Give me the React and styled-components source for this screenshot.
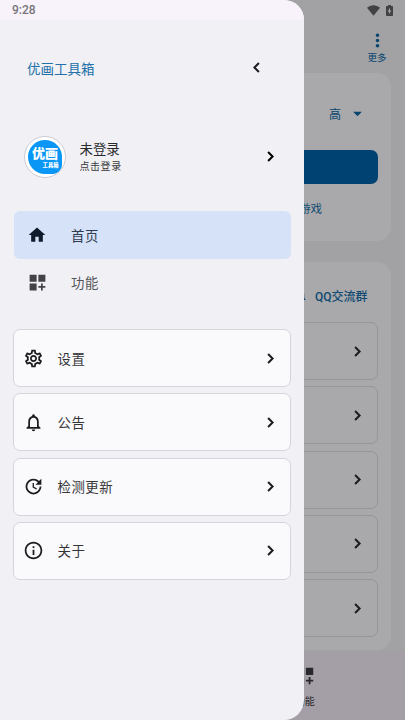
import React from 'react';
import styled, { createGlobalStyle } from 'styled-components';
import {
  MdHome,
  MdDashboardCustomize,
  MdOutlineSettings,
  MdNotifications,
  MdNotificationsNone,
  MdUpdate,
  MdInfoOutline,
  MdMoreVert,
  MdArrowDropDown,
} from 'react-icons/md';

const GlobalStyle = createGlobalStyle`
  * {
    box-sizing: border-box;
  }
  body {
    margin: 0;
    font-family: Roboto, "Noto Sans CJK SC", sans-serif;
  }
  svg {
    display: block;
    flex-shrink: 0;
  }
`;

const Screen = styled.div`
  position: relative;
  display: flex;
  flex-direction: column;
  width: 405px;
  height: 720px;
  overflow: hidden;
  background: #a2a2a4;
`;

const StatusBar = styled.div`
  display: flex;
  justify-content: flex-end;
  align-items: center;
  gap: 6px;
  height: 20px;
  padding-right: 12px;
  color: #424244;
`;

const TopBar = styled.div`
  display: flex;
  justify-content: flex-end;
  height: 53px;
  padding: 10px 16px 0 0;
`;

const MoreButton = styled.div`
  display: flex;
  flex-direction: column;
  align-items: center;
  width: 24px;
  color: #08456f;
  font-size: 9.5px;
  line-height: 14px;
  white-space: nowrap;
`;

const Card = styled.section`
  height: ${(props) => props.$height}px;
  margin: 0 14px ${(props) => props.$gap}px;
  padding: 0 13px;
  border-radius: 14px;
  background: #a9a9ab;
`;

const SelectRow = styled.div`
  display: flex;
  justify-content: flex-end;
  align-items: center;
  gap: 6px;
  height: 77px;
  padding: 3px 10px 0 0;
  color: #08456f;
  font-size: 12px;
`;

const PrimaryButton = styled.div`
  height: 34px;
  border-radius: 7px;
  background: #004272;
`;

const LinkRow = styled.div`
  display: flex;
  justify-content: flex-end;
  align-items: center;
  height: ${(props) => props.$height}px;
  padding-right: ${(props) => props.$right}px;
  padding-top: ${(props) => props.$top || 0}px;
  color: #0f4b72;
  font-size: ${(props) => props.$size}px;
  font-weight: ${(props) => props.$weight || 400};
`;

const BellMark = styled.span`
  display: flex;
  margin-right: 7px;
`;

const List = styled.div`
  display: flex;
  flex-direction: column;
  gap: 6.3px;
`;

const ListRow = styled.div`
  display: flex;
  align-items: center;
  height: 58px;
  padding: 0 9px;
  border: 1px solid ${(props) => (props.$dim ? '#969698' : '#d5d5dc')};
  border-radius: 7px;
  background: ${(props) => (props.$dim ? 'transparent' : '#fafafd')};
  color: #1c1c1f;
`;

const RowText = styled.span`
  flex: 1;
  margin-left: 13.5px;
  padding-bottom: 1px;
  color: #353538;
  font-size: 13.4px;
  letter-spacing: 0.5px;
`;

const Spacer = styled.div`
  flex: 1;
`;

const BottomNav = styled.nav`
  display: flex;
  flex: 1;
  background: #a49fa6;
`;

const NavTab = styled.div`
  display: flex;
  flex: 1;
  flex-direction: column;
  align-items: center;
  gap: 7px;
  padding: 14px 0 0 2px;
  color: #29282c;
  font-size: 10px;
  line-height: 15px;
`;

/* The drawer lies over the dimmed page */
const Drawer = styled.aside`
  position: absolute;
  top: 0;
  left: 0;
  width: 303.5px;
  height: 720px;
  overflow: hidden;
  border-radius: 0 20px 20px 0;
  background: #f0f0f5;
`;

const DrawerStatus = styled.div`
  height: 20px;
  padding-left: 12px;
  background: #f8f2fb;
  color: #77757a;
  font-size: 12px;
  font-weight: 500;
  line-height: 21px;
`;

const DrawerHeader = styled.div`
  display: flex;
  justify-content: space-between;
  align-items: center;
  height: 96px;
  padding: 0 36.5px 1px 27px;
  color: #1c1c1f;
`;

const Title = styled.span`
  color: #2371a8;
  font-size: 13.5px;
`;

const Profile = styled.div`
  display: flex;
  align-items: center;
  height: 82px;
  margin-bottom: 13px;
  padding: 0 23px 1px 24px;
`;

const Avatar = styled.div`
  display: flex;
  width: 42px;
  height: 42px;
  padding: 3px;
  border: 1px solid #cdccd2;
  border-radius: 50%;
  background: #fff;
  overflow: hidden;
`;

const AvatarMark = styled.div`
  display: flex;
  flex-direction: column;
  align-items: center;
  width: 34px;
  height: 34px;
  flex-shrink: 0;
  padding-top: 6px;
  border-radius: 17px 17px 9px 17px;
  background: #0a96f5;
  color: #fff;
  font-weight: 900;
  white-space: nowrap;
`;

const AvatarName = styled.span`
  font-size: 13px;
  line-height: 15px;
`;

const AvatarSub = styled.span`
  align-self: flex-end;
  padding-right: 3.5px;
  font-size: 5.3px;
  line-height: 8px;
`;

const ProfileText = styled.div`
  flex: 1;
  margin-left: 13.5px;
  padding-top: 2px;
  color: #29292c;
`;

const ProfileName = styled.div`
  font-size: 13.4px;
  line-height: 19px;
`;

const ProfileHint = styled.div`
  color: #39393c;
  font-size: 10px;
  letter-spacing: 0.55px;
  line-height: 16px;
`;

const MenuItem = styled.div`
  display: flex;
  align-items: center;
  height: 47.5px;
  margin: 0 13px 0 13.5px;
  padding-left: 13px;
  border-radius: 6px;
  background: ${(props) => (props.$active ? '#d6e2f8' : 'transparent')};
  color: ${(props) => (props.$active ? '#0d1b2c' : '#434347')};
`;

const MenuIcon = styled.span`
  display: flex;
  justify-content: center;
  width: 21px;
  margin-right: 23.5px;
`;

const MenuText = styled.span`
  color: ${(props) => (props.$active ? '#303b4d' : '#56565a')};
  font-size: 13.4px;
  letter-spacing: 0.5px;
`;

const DrawerList = styled(List)`
  margin: 23px 13px 0;
`;

const WifiIcon = () => (
  <svg width="13" height="11" viewBox="0 0 13 11" fill="currentColor">
    <path d="M0 2.8C3.8-.6 9.2-.6 13 2.8L6.5 10.8Z" />
  </svg>
);

const BatteryIcon = () => (
  <svg width="7" height="11" viewBox="0 0 7 11" fill="currentColor">
    <path
      fillRule="evenodd"
      d="M2 0h3v1h1.2q.8 0 .8.8v8.4q0 .8-.8.8H.8Q0 11 0 10.2V1.8Q0 1 .8 1H2ZM4 2.7 1.6 6.5H3V9.3L5.4 5.4H4Z"
    />
  </svg>
);

const Chevron = ({ left }) => (
  <svg
    width="21"
    height="21"
    viewBox="0 0 21 21"
    fill="none"
    stroke="currentColor"
    strokeWidth="2"
  >
    <path d={left ? 'M12.9 6 8.4 10.5l4.5 4.5' : 'M8.100 6l4.500 4.500L8.100 15'} />
  </svg>
);

const drawerRows = [
  { label: '设置', icon: MdOutlineSettings },
  { label: '公告', icon: MdNotificationsNone },
  { label: '检测更新', icon: MdUpdate },
  { label: '关于', icon: MdInfoOutline },
];

const App = () => {
  return (
    <>
      <GlobalStyle />
      <Screen>
        <StatusBar>
          <WifiIcon />
          <BatteryIcon />
        </StatusBar>
        <TopBar>
          <MoreButton>
            <MdMoreVert size={21} />
            更多
          </MoreButton>
        </TopBar>
        <Card $height={168} $gap={21}>
          <SelectRow>
            高
            <MdArrowDropDown size={21} />
          </SelectRow>
          <PrimaryButton />
          <LinkRow $height={48} $right={56} $size={11.5}>游戏</LinkRow>
        </Card>
        <Card $height={388} $gap={1}>
          <LinkRow $height={60} $top={7} $right={10.5} $size={12} $weight={500}>
            <BellMark>
              <MdNotifications size={15} />
            </BellMark>
            QQ交流群
          </LinkRow>
          <List>
            {[0, 1, 2, 3, 4].map((row) => (
              <ListRow key={row} $dim>
                <Spacer />
                <Chevron />
              </ListRow>
            ))}
          </List>
        </Card>
        <BottomNav>
          <NavTab />
          <NavTab>
            <MdDashboardCustomize size={22} />
            功能
          </NavTab>
        </BottomNav>

        <Drawer>
          <DrawerStatus>9:28</DrawerStatus>
          <DrawerHeader>
            <Title>优画工具箱</Title>
            <Chevron left />
          </DrawerHeader>
          <Profile>
            <Avatar>
              <AvatarMark>
                <AvatarName>优画</AvatarName>
                <AvatarSub>工具箱</AvatarSub>
              </AvatarMark>
            </Avatar>
            <ProfileText>
              <ProfileName>未登录</ProfileName>
              <ProfileHint>点击登录</ProfileHint>
            </ProfileText>
            <Chevron />
          </Profile>
          <MenuItem $active>
            <MenuIcon>
              <MdHome size={20} />
            </MenuIcon>
            <MenuText $active>首页</MenuText>
          </MenuItem>
          <MenuItem>
            <MenuIcon>
              <MdDashboardCustomize size={21} />
            </MenuIcon>
            <MenuText>功能</MenuText>
          </MenuItem>
          <DrawerList>
            {drawerRows.map(({ label, icon: Icon }) => (
              <ListRow key={label}>
                <Icon size={21} />
                <RowText>{label}</RowText>
                <Chevron />
              </ListRow>
            ))}
          </DrawerList>
        </Drawer>
      </Screen>
    </>
  );
};

export default App;
